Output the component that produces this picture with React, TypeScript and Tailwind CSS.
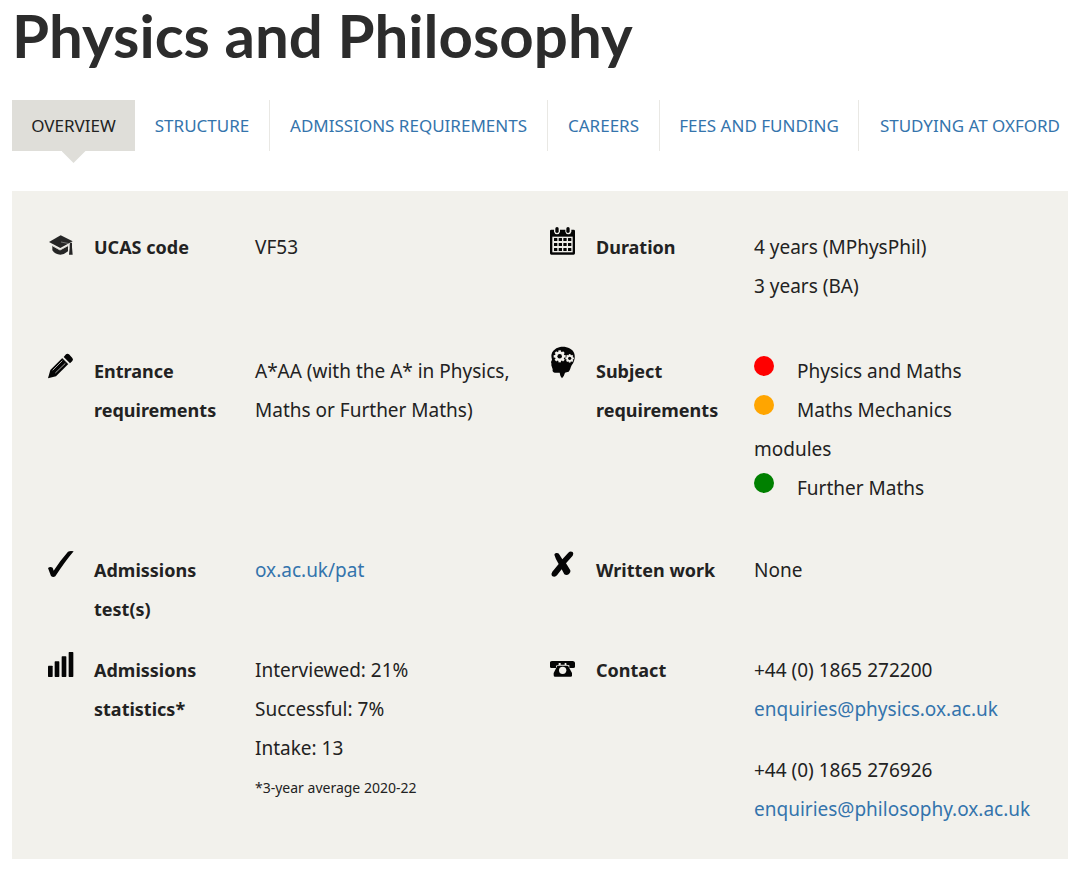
import React from "react";

type IconProps = { box: string; children: React.ReactNode };

function Icon({ box, children }: IconProps) {
  return (
    <svg viewBox={box} className="h-[39px] w-[26px] overflow-visible" fill="#050505" aria-hidden="true">
      {children}
    </svg>
  );
}

const GraduationIcon = () => (
  <Icon box="24 24 78 117">
    <g fill="#262626">
      <path d="M27 66 L62 46 L98 64 L61 84 Z" />
      <path d="M37 77 L60 90 L84 77 V94 Q73 104 61 104 Q46 104 37 91 Z" />
      <path d="M90 68 H96 V82 L98 104 H87 L89 83 Z" />
    </g>
    <path d="M37 77 L60 90 L84 77" fill="none" stroke="#d5d4cf" strokeWidth="3" />
    <path d="M63 66 L88 71 V84" fill="none" stroke="#999" strokeWidth="2" />
  </Icon>
);

const CalendarIcon = () => (
  <Icon box="30 24 78 117">
    <path d="M30 32 Q30 29 34 29 H42 V35 Q44 43 51 43 Q58 43 60 35 V29 H76 V35 Q78 43 85 43 Q92 43 94 35 V29 H101 Q105 29 105 33 V100 Q105 104 101 104 H34 Q30 104 30 100 Z" />
    <rect x="46" y="21" width="10" height="18" rx="5" />
    <rect x="79" y="21" width="10" height="18" rx="5" />
    <rect x="37" y="50" width="61" height="47" fill="#efeee9" />
    {[54, 69, 84].map((y) =>
      [42, 56, 70, 84].map((x) => <rect key={`${x}-${y}`} x={x} y={y} width="10" height="9" rx="1" />),
    )}
  </Icon>
);

const PencilIcon = () => (
  <Icon box="24 36 78 117">
    <path d="M24 115 L31 90 L67 54 L85 72 L48 109 Z" />
    <path d="M71 51 L78 43 Q82 39 87 43 L97 54 Q101 59 97 63 L90 70 Z" />
    <path d="M38 91 L67 62 M46 99 L76 70" stroke="#aaa9a6" strokeWidth="3" />
    <path d="M69 53 L88 72" stroke="#e5e4df" strokeWidth="4" />
  </Icon>
);

function Gear({ x, y, r }: { x: number; y: number; r: number }) {
  return (
    <g transform={`translate(${x} ${y}) scale(${r})`}>
      <circle r="0.84" fill="#f2f1ec" />
      {[0, 45, 90, 135, 180, 225, 270, 315].map((a) => (
        <rect key={a} x="-0.22" y="-1.06" width="0.44" height="0.5" fill="#f2f1ec" transform={`rotate(${a})`} />
      ))}
      <circle r="0.4" />
    </g>
  );
}

const ThinkingIcon = () => (
  <Icon box="30 36 78 117">
    <path d="M60 21 C76 18 98 24 103 41 C107 55 101 68 95 76 C91 82 91 91 86 95 Q79 97 75 98 Q72 109 66 115 Q60 108 59 98 H44 Q36 97 38 88 L34 76 Q35 71 33 66 L36 59 Q31 42 40 32 Q48 23 60 21 Z" />
    <Gear x={59} y={49} r={17} />
    <Gear x={89} y={55} r={12} />
  </Icon>
);

const TickIcon = () => (
  <Icon box="24 33 78 117">
    <path d="M24 84 Q31 78 38 83 L41 92 Q60 62 84 35 Q91 31 101 34 Q74 66 46 109 Q39 114 33 108 Q28 95 24 84 Z" />
  </Icon>
);

const CrossIcon = () => (
  <Icon box="30 33 78 117">
    <path d="M43 44 Q44 38 51 39 Q57 39 59 45 L67 58 L85 38 Q91 32 98 36 Q102 41 98 47 L78 70 L91 91 Q93 98 87 102 Q80 107 73 103 L65 88 L51 106 Q45 113 36 108 Q32 102 37 95 L56 72 Q47 58 43 44 Z" />
  </Icon>
);

const BarsIcon = () => (
  <Icon box="24 33 78 117">
    <rect x="24" y="77" width="14" height="34" rx="2" />
    <rect x="44" y="64" width="14" height="47" rx="2" />
    <rect x="65" y="49" width="14" height="62" rx="2" />
    <rect x="86" y="36" width="14" height="75" rx="2" />
  </Icon>
);

const PhoneIcon = () => (
  <Icon box="30 33 78 117">
    <path d="M30 67 Q31 63 37 63 H98 Q104 63 105 68 V80 Q105 84 100 84 H88 V76 L79 74 V69 H74 V74 H62 V69 H56 V74 L48 77 V84 H34 Q30 84 30 80 Z" />
    <path d="M52 77 H84 L96 99 V107 Q96 110 92 110 H44 Q41 110 41 106 V99 Z" />
    <circle cx="68" cy="91" r="11" fill="#f2f1ec" />
  </Icon>
);

function Fact({ icon, label, children }: { icon: React.ReactNode; label: React.ReactNode; children: React.ReactNode }) {
  return (
    <div className="contents">
      {icon}
      <dt className="text-[18px] font-bold">{label}</dt>
      <dd>{children}</dd>
    </div>
  );
}

function Dot({ className }: { className: string }) {
  return <span className={`mr-[23px] inline-block h-5 w-5 rounded-full align-[2px] ${className}`} />;
}

const link = "text-[#3474ac] hover:underline";
const row = "grid grid-cols-[26px_141px_275fr_26px_138px_284fr] gap-x-5";

const tabs = ["Structure", "Admissions requirements", "Careers", "Fees and funding", "Studying at Oxford"];

export default function App() {
  return (
    <main className="min-h-screen bg-white px-3 pb-4 font-['Noto_Sans','Open_Sans',sans-serif] text-[#222]">
      <h1 className="font-['Lato','Noto_Sans',sans-serif] text-[60px] leading-[70px] font-bold text-[#2c2c2c]">
        Physics and Philosophy
      </h1>
      <nav className="mt-[30px] grid grid-cols-[123fr_135fr_278fr_112fr_199fr_209fr] text-[17px] leading-[51px] whitespace-nowrap uppercase">
        <a href="#overview" aria-current="page" className="relative bg-[#dfded9] text-center text-[#222]">
          Overview
          <span className="absolute top-full left-1/2 h-3 w-6 -translate-x-1/2 bg-[#dfded9] [clip-path:polygon(0_0,100%_0,50%_100%)]" />
        </a>
        {tabs.map((tab) => (
          <a
            key={tab}
            href="#"
            className="border-r border-[#e9e8e4] text-center text-[#3474ac] last:border-r-0 last:pr-2 last:text-right"
          >
            {tab}
          </a>
        ))}
      </nav>
      <dl className="mt-10 bg-[#f2f1ec] pt-[37px] pr-[30px] pb-[30px] pl-9 text-[19px] leading-[39px]">
        <div className={`${row} mb-[46px]`}>
          <Fact icon={<GraduationIcon />} label="UCAS code">VF53</Fact>
          <Fact icon={<CalendarIcon />} label="Duration">
            4 years (MPhysPhil)
            <br />3 years (BA)
          </Fact>
        </div>
        <div className={`${row} mb-[43px]`}>
          <Fact icon={<PencilIcon />} label={<>Entrance<br />requirements</>}>
            A*AA (with the A* in Physics,
            <br />
            Maths or Further Maths)
          </Fact>
          <Fact icon={<ThinkingIcon />} label={<>Subject<br />requirements</>}>
            <Dot className="bg-[#ff0000]" />Physics and Maths
            <br />
            <Dot className="bg-[#ffa500]" />Maths Mechanics
            <br />
            modules
            <br />
            <Dot className="bg-[#008000]" />Further Maths
          </Fact>
        </div>
        <div className={`${row} mb-[22px]`}>
          <Fact icon={<TickIcon />} label={<>Admissions<br />test(s)</>}>
            <a href="#pat" className={link}>ox.ac.uk/pat</a>
          </Fact>
          <Fact icon={<CrossIcon />} label="Written work">None</Fact>
        </div>
        <div className={row}>
          <Fact icon={<BarsIcon />} label={<>Admissions<br />statistics*</>}>
            <p>Interviewed: 21%</p>
            <p>Successful: 7%</p>
            <p>Intake: 13</p>
            <p className="text-[14px]">*3-year average 2020-22</p>
          </Fact>
          <Fact icon={<PhoneIcon />} label="Contact">
            <p>+44 (0) 1865 272200</p>
            <p><a href="mailto:enquiries@physics.ox.ac.uk" className={link}>enquiries@physics.ox.ac.uk</a></p>
            <p className="mt-[22px]">+44 (0) 1865 276926</p>
            <p><a href="mailto:enquiries@philosophy.ox.ac.uk" className={link}>enquiries@philosophy.ox.ac.uk</a></p>
          </Fact>
        </div>
      </dl>
    </main>
  );
}
